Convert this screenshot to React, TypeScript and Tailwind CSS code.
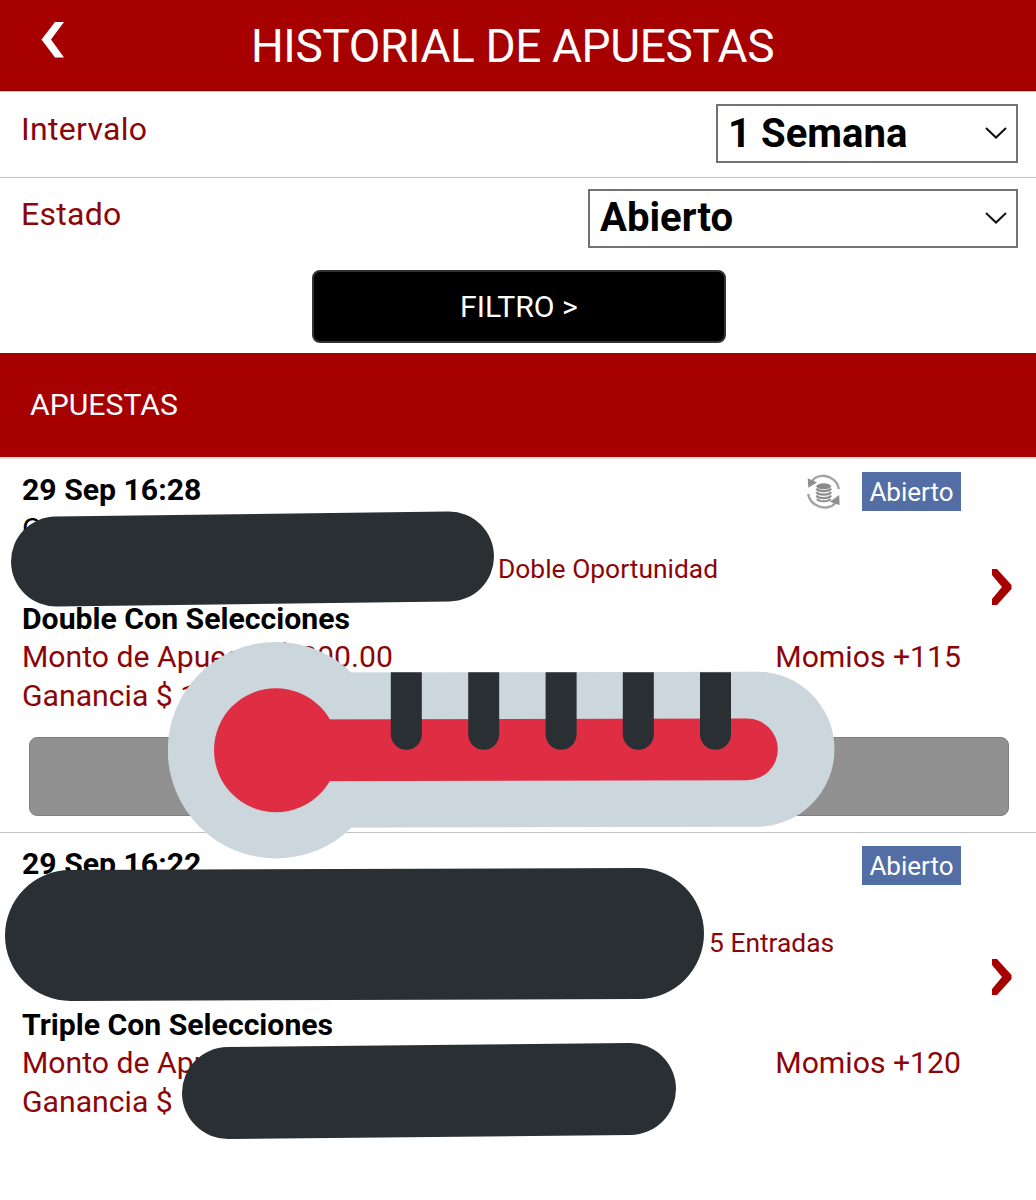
import type { ReactNode } from "react";

type Bet = {
  date: string;
  teams: string;
  market: string;
  marketClass: string;
  type: string;
  stake: string;
  winnings: string;
  odds: string;
  cashOut: boolean;
};

const bets: Bet[] = [
  { date: "29 Sep 16:28", teams: "C", market: "Doble Oportunidad", marketClass: "pl-[476px]", type: "Double Con Selecciones", stake: "Monto de Apuesta $ 200.00", winnings: "Ganancia $ 1", odds: "Momios +115", cashOut: true },
  { date: "29 Sep 16:22", teams: "", market: "5 Entradas", marketClass: "pl-[687px]", type: "Triple Con Selecciones", stake: "Monto de Apuesta", winnings: "Ganancia $", odds: "Momios +120", cashOut: false },
];

function FilterRow({ label, children }: { label: string; children: ReactNode }) {
  return (
    <div className="flex justify-between items-start pl-[21px] pr-[18px]">
      <span className="mt-[7px] text-[32px] leading-[37px] tracking-[0.3px] text-[#8c0508]">{label}</span>
      {children}
    </div>
  );
}

function SelectArrow() {
  return (
    <svg className="w-[24px] h-[14px] -mt-[2px]" viewBox="0 0 24 14" fill="none" stroke="#111" strokeWidth="2">
      <path d="M2 2 L12 11.500 L22 2" />
    </svg>
  );
}

function CashOutIcon() {
  return (
    <svg className="w-[36px] h-[36px]" viewBox="0 0 36 36" fill="none">
      <g stroke="#a3a3a3" strokeWidth="2.4">
        <path d="M6 7 C10 1.500 18 0.500 24 3.500 C29 6 32 9.500 32.800 15" />
        <path d="M30 28.500 C26 33.500 18 35 12 32 C6 29.500 3 26 2.200 20" />
      </g>
      <path d="M2.500 5.500 L9.500 8.500 L3 12.500 Z" fill="#8f8f8f" stroke="#8f8f8f" strokeWidth="1.500" />
      <path d="M32.800 30 L25.500 27.500 L32.500 22.500 Z" fill="#8f8f8f" stroke="#8f8f8f" strokeWidth="1.500" />
      <ellipse cx="17.700" cy="12.300" rx="7.300" ry="3" fill="#8a8a8a" />
      <g stroke="#8f8f8f" strokeWidth="2.200">
        <path d="M10.500 14.500 C12 18 23.500 18 25 14.500" />
        <path d="M10.500 18 C12 21.500 23.500 21.500 25 18" />
        <path d="M10.500 21.500 C12 25 23.500 25 25 21.500" />
        <path d="M11 25 C13 28 22.500 28 24.500 25" />
      </g>
    </svg>
  );
}

function Thermometer() {
  return (
    <svg className="absolute left-[168px] top-[642px] w-[667px] h-[217px]" viewBox="168 642 667 217">
      <g fill="#cbd6dd">
        <circle cx="276" cy="750.2" r="108.2" />
        <path d="M276 672.600 L757 671.700 A77.500 77.500 0 0 1 757 826.700 L276 827.700 Z" />
      </g>
      <g fill="#df2e44">
        <circle cx="276" cy="750.2" r="62" />
        <path d="M276 719.400 L747 718.500 A30.800 30.800 0 0 1 747 780.200 L276 781.300 Z" />
      </g>
      <g fill="#292f33">
        {[390.8, 468.2, 545.6, 622.8, 700].map((x) => (
          <path key={x} d={`M${x} 672.300 h31 v62 a15.500 15.500 0 0 1 -31 0 Z`} />
        ))}
      </g>
    </svg>
  );
}

function BetRow({ bet }: { bet: Bet }) {
  return (
    <div className="text-[30.2px]">
      <div className="flex">
        <div className="w-[939px] ml-[22px] pt-[12px]">
          <div className="flex justify-between items-start h-[38px]">
            <span className="font-bold leading-[38px] text-black">{bet.date}</span>
            <div className="flex items-center gap-[20px] mt-[1px]">
              {bet.cashOut && <CashOutIcon />}
              <span className="w-[99px] h-[39px] bg-[#526ea5] text-white text-[26px] leading-[40px] text-center">Abierto</span>
            </div>
          </div>
          <div className="h-[41px] leading-[40px] text-black">{bet.teams}</div>
          <div className={`h-[50px] text-[26.4px] leading-[38px] text-[#8c0508] whitespace-nowrap ${bet.marketClass}`}>{bet.market}</div>
          {!bet.cashOut && <div className="h-[32px]" />}
          <div className="h-[38px] leading-[38px] font-bold text-black">{bet.type}</div>
          <div className="flex justify-between h-[38.5px] leading-[38.5px] text-[#8c0508]">
            <span>{bet.stake}</span>
            <span>{bet.odds}</span>
          </div>
          <div className="h-[38.5px] leading-[38.5px] text-[#8c0508]">{bet.winnings}</div>
        </div>
        <div className="flex items-center ml-[31px]">
          <svg className="w-[20px] h-[36px]" viewBox="0 0 20 36" fill="#a60000">
            <path d="M0 0 H5 L19.500 16 V20 L5 36 H0 V30 L10 18 L0 6 Z" />
          </svg>
        </div>
      </div>
      {bet.cashOut && (
        <div className="pt-[22px] pb-[16px] pl-[29px] pr-[27px]">
          <div className="h-[79px] rounded-[8px] bg-[#919191] border border-[#808080]" />
        </div>
      )}
    </div>
  );
}

export default function App() {
  return (
    <div className="relative w-[1036px] h-[1200px] overflow-hidden bg-white font-['Roboto',sans-serif]">
      <header className="relative flex justify-center h-[91px] bg-[#a60000] border-b border-[#7d0000]">
        <svg className="absolute left-[41px] top-[22px] w-[24px] h-[36px]" viewBox="0 0 24 36" fill="#fff">
          <path d="M14 0 H23 L10 17.500 L23 35.500 H14 L0.500 17.500 Z" />
        </svg>
        <h1 className="pr-[11px] text-[46px] leading-[92px] tracking-[-0.4px] text-white">HISTORIAL DE APUESTAS</h1>
      </header>
      <div className="h-[87px] pt-[12px] border-t border-t-[#f3b5b0] border-b border-b-[#c3c3c3]">
        <FilterRow label="Intervalo">
          <div className="flex items-center justify-between w-[302px] h-[59px] border-2 border-[#737373] pl-[10px] pr-[8px]">
            <span className="text-[40.1px] font-bold leading-[54px] text-black">1 Semana</span>
            <SelectArrow />
          </div>
        </FilterRow>
      </div>
      <div className="h-[92px] pt-[11px]">
        <FilterRow label="Estado">
          <div className="flex items-center justify-between w-[430px] h-[59px] border-2 border-[#737373] pl-[10px] pr-[8px]">
            <span className="-mt-[2px] text-[40.1px] font-bold leading-[54px] text-black">Abierto</span>
            <SelectArrow />
          </div>
        </FilterRow>
      </div>
      <div className="flex justify-center h-[83px] pl-[2px]">
        <button className="w-[414px] h-[73px] rounded-[8px] bg-black border-2 border-[#333] text-[30.2px] leading-[69px] text-white">FILTRO &gt;</button>
      </div>
      <div className="h-[104px] pl-[30px] bg-[#a60000] text-[30.2px] leading-[104px] text-white">APUESTAS</div>
      <div className="border-t-2 border-[#f0dedc]">
        {bets.map((bet) => (
          <div key={bet.date} className="border-b border-[#c3c3c3] last:border-b-0">
            <BetRow bet={bet} />
          </div>
        ))}
      </div>

      {/* blocks covering private details */}
      <div className="absolute left-[11px] top-[514px] w-[483px] h-[90px] rounded-full bg-[#292f33] -rotate-[0.73deg]" />
      <div className="absolute left-[5px] top-[869px] w-[699px] h-[131px] rounded-full bg-[#292f33] -rotate-[0.2deg]" />
      <div className="absolute left-[182px] top-[1045px] w-[494px] h-[92px] rounded-full bg-[#292f33] -rotate-[0.57deg]" />
      <Thermometer />
    </div>
  );
}
